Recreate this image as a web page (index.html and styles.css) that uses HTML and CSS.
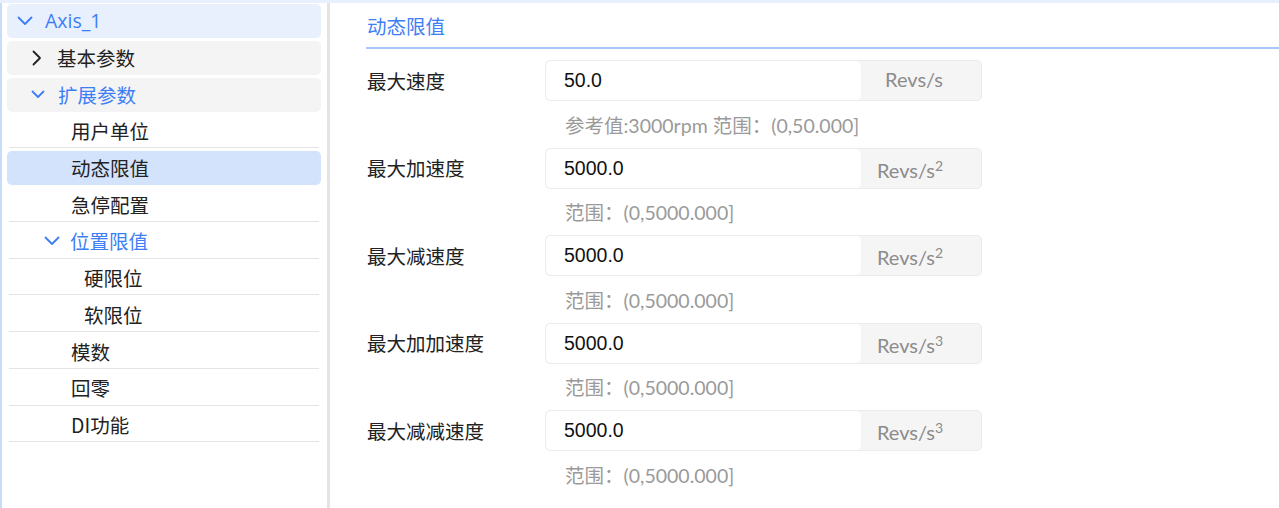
FILE: index.html
```html
<!DOCTYPE html>
<html lang="zh-CN">
<head>
  <meta charset="UTF-8">
  <title>动态限值</title>
  <link rel="stylesheet" href="styles.css">
</head>
<body>
  <div class="app">
    <aside class="sidebar">
      <div class="node group open root">
        <svg class="arrow" width="16" height="10" viewBox="0 0 16 10"><polyline points="1.5,1.5 8,8 14.5,1.5"/></svg>
        <span>Axis_1</span>
      </div>
      <div class="node group lv1">
        <svg class="arrow right" width="10" height="16" viewBox="0 0 10 16"><polyline points="1.5,1.5 8,8 1.5,14.5"/></svg>
        <span>基本参数</span>
      </div>
      <div class="node group open lv1">
        <svg class="arrow" width="14" height="9" viewBox="0 0 14 9"><polyline points="1.5,1.5 7,7 12.5,1.5"/></svg>
        <span>扩展参数</span>
      </div>
      <div class="node leaf lv2">用户单位</div>
      <div class="node leaf lv2 active">动态限值</div>
      <div class="node leaf lv2">急停配置</div>
      <div class="node leaf open sub lv2">
        <svg class="arrow" width="16" height="10" viewBox="0 0 16 10"><polyline points="1.5,1.5 8,8 14.5,1.5"/></svg>
        <span>位置限值</span>
      </div>
      <div class="node leaf lv3">硬限位</div>
      <div class="node leaf lv3">软限位</div>
      <div class="node leaf lv2">模数</div>
      <div class="node leaf lv2">回零</div>
      <div class="node leaf lv2">DI功能</div>
    </aside>
    <main class="content">
      <div class="title">动态限值</div>
      <div class="field">
        <label>最大速度</label>
        <div class="input-group">
          <div class="input">50.0</div>
          <div class="unit">Revs/s</div>
        </div>
      </div>
      <div class="hint">参考值:3000rpm 范围：(0,50.000]</div>
      <div class="field">
        <label>最大加速度</label>
        <div class="input-group">
          <div class="input">5000.0</div>
          <div class="unit">Revs/s<sup>2</sup></div>
        </div>
      </div>
      <div class="hint">范围：(0,5000.000]</div>
      <div class="field">
        <label>最大减速度</label>
        <div class="input-group">
          <div class="input">5000.0</div>
          <div class="unit">Revs/s<sup>2</sup></div>
        </div>
      </div>
      <div class="hint">范围：(0,5000.000]</div>
      <div class="field">
        <label>最大加加速度</label>
        <div class="input-group">
          <div class="input">5000.0</div>
          <div class="unit">Revs/s<sup>3</sup></div>
        </div>
      </div>
      <div class="hint">范围：(0,5000.000]</div>
      <div class="field">
        <label>最大减减速度</label>
        <div class="input-group">
          <div class="input">5000.0</div>
          <div class="unit">Revs/s<sup>3</sup></div>
        </div>
      </div>
      <div class="hint">范围：(0,5000.000]</div>
    </main>
  </div>
</body>
</html>
```

FILE: styles.css
```css
body {
  margin: 0;
  padding: 0;
  background-color: #fff;
  font-family: "Noto Sans CJK SC", sans-serif;
  color: #222;
  overflow: hidden;
}
.app {
  display: flex;
  height: 508px;
  border-top: 3px solid #e8f0fd;
  box-sizing: border-box;
}
.sidebar {
  flex-shrink: 0;
  border-left: 2px solid #c7dbfb;
  border-right: 3px solid #e3e3e3;
  padding: 1px 6px 0 5px;
  width: 314px;
}
.node {
  display: flex;
  align-items: center;
  height: 34px;
  margin-bottom: 2.75px;
  border-radius: 5px;
  font-size: 19.5px;
  line-height: 1;
  box-sizing: border-box;
}
.group {
  background-color: #f4f4f4;
}
.root {
  background-color: #e8f0fe;
  color: #3d7ef6;
  padding-left: 10px;
  font-family: "Open Sans", "Noto Sans CJK SC", sans-serif;
}
.root .arrow {
  margin-right: 12px;
}
.lv1 {
  padding-left: 25px;
}
.lv1 .arrow {
  margin-right: 15px;
}
.lv1.open {
  padding-left: 24px;
}
.lv1.open .arrow {
  margin-right: 13px;
}
.open {
  color: #3d7ef6;
}
.arrow {
  fill: none;
  stroke: #3d7ef6;
  stroke-width: 1.8;
  stroke-linecap: round;
  stroke-linejoin: round;
}
.arrow.right {
  stroke: #222;
}
.leaf {
  padding-left: 62px;
  border-bottom: 1.5px solid #e4e4e4;
  border-radius: 0;
  margin-left: 2px;
  margin-right: 2px;
}
.leaf.active {
  background-color: #d3e3fc;
  border-bottom: none;
  border-radius: 5px;
  margin-left: 0;
  margin-right: 0;
  padding-left: 64px;
}
.leaf.sub {
  padding-left: 35px;
}
.leaf.sub .arrow {
  margin-right: 10px;
}
.lv3 {
  padding-left: 75px;
}
.content {
  flex: 1;
  min-width: 0;
  padding-left: 36px;
}
.title {
  height: 44px;
  line-height: 46px;
  border-bottom: 2px solid #a7c8fc;
  color: #3d7ef6;
  font-size: 19.5px;
  padding-left: 1px;
}
.field {
  display: flex;
  align-items: center;
  height: 41px;
  margin-top: 11px;
  padding-left: 1px;
}
.field label {
  width: 178px;
  font-size: 19.5px;
  line-height: 1;
  color: #222;
}
.input-group {
  display: flex;
  width: 437px;
  height: 41px;
  border: 1px solid #ececec;
  border-radius: 5px;
  background-color: #f5f5f5;
  box-sizing: border-box;
}
.input {
  flex: 1;
  background-color: #fff;
  border-radius: 5px;
  padding-left: 18px;
  font-family: "Liberation Sans", Arial, sans-serif;
  font-size: 19.5px;
  line-height: 39px;
  color: #111;
}
.unit {
  width: 120px;
  height: 39px;
  padding-right: 38px;
  padding-top: 3px;
  box-sizing: border-box;
  text-align: right;
  font-family: Lato, "Noto Sans CJK SC", sans-serif;
  font-size: 20px;
  color: #8c8c8c;
  line-height: 36px;
}
.unit sup {
  font-size: 14px;
  line-height: 0;
  vertical-align: 7px;
}
.unit:not(:has(sup)) {
  padding-top: 0;
}
.hint {
  margin-left: 199px;
  height: 24px;
  padding: 12.5px 0 10px;
  line-height: 24px;
  font-family: Lato, "Noto Sans CJK SC", sans-serif;
  font-size: 19.5px;
  color: #9a9a9a;
  white-space: nowrap;
}
.hint + .field {
  margin-top: 0;
}
```
